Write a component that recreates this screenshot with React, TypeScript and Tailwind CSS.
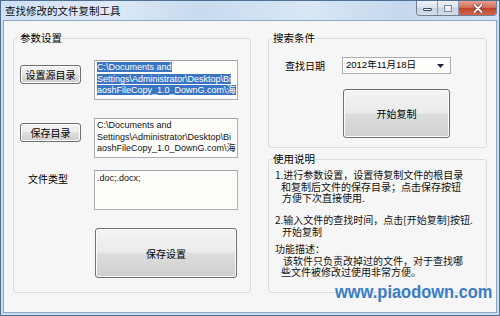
import React from 'react';

const cjk = "font-['Noto_Sans_CJK_SC','Noto_Sans',sans-serif]";
const latin = "font-['Liberation_Sans','Noto_Sans_CJK_SC',sans-serif]";
const btnBg =
  'border border-[#707070] rounded-[3px] bg-[linear-gradient(#f3f3f3,#ebebeb_48%,#dddddd_52%,#cfcfcf)] shadow-[inset_0_0_0_1px_#fcfcfc]';

function WinButtons() {
  return (
    <div className="flex h-[15px] self-start mr-[2px] rounded-b-[4px] overflow-hidden border border-t-0 border-[#6f8198]">
      <div className="w-[21px] h-full flex items-end justify-center pb-[4px] bg-[linear-gradient(#eef2f7,#d9e1ea_50%,#c9d3df_51%,#d6dee8)] border-r border-[#8e9cae]">
        <div className="w-[9px] h-[3px] bg-white border border-[#3c4a5c] rounded-[1px]" />
      </div>
      <div className="w-[21px] h-full flex items-center justify-center bg-[linear-gradient(#eef2f7,#d9e1ea_50%,#c9d3df_51%,#d6dee8)] border-r border-[#8e9cae]">
        <div className="w-[8px] h-[7px] border border-[#7f8a98] bg-white/60" />
      </div>
      <div className="w-[37px] h-full flex items-center justify-center bg-[linear-gradient(#e7a08f,#d16a55_50%,#c0432d_51%,#d0664c)]">
        <svg width="10" height="9" viewBox="0 0 10 9">
          <path d="M1.5 1 L8.5 8 M8.5 1 L1.5 8" stroke="#5a1e14" strokeWidth="3.2" strokeLinecap="round" />
          <path d="M1.5 1 L8.5 8 M8.5 1 L1.5 8" stroke="#ffffff" strokeWidth="2" strokeLinecap="round" />
        </svg>
      </div>
    </div>
  );
}

function TextBox({ lines, selected, className = '' }: { lines: string[]; selected?: boolean; className?: string }) {
  return (
    <div className={`w-[144px] border border-[#abadb3] border-t-[#a0a4ab] bg-[#fffdfa] pl-[2px] pt-[1px] overflow-hidden ${className}`}>
      {lines.map((l, i) => (
        <div key={i} className="h-[11.5px] leading-[11.5px] whitespace-nowrap">
          <span className={selected ? 'bg-[#3a75c4] text-white' : 'text-[#111]'}>{l}</span>
        </div>
      ))}
    </div>
  );
}

const pathLines = ['C:\\Documents and', 'Settings\\Administrator\\Desktop\\Bi', 'aoshFileCopy_1.0_DownG.com\\海'];

export default function App() {
  return (
    <div className={`w-[500px] h-[316px] flex flex-col border border-[#4f6f93] bg-[#c9dcf0] px-[2px] pb-[2px] ${cjk} text-[#000]`}>
      {/* title bar */}
      <div className="h-[19px] flex items-start justify-between -mx-[2px] bg-[linear-gradient(100deg,#cfe0f3_0%,#dde9f7_22%,#c8dbef_40%,#d9e7f6_62%,#c5d8ee_80%,#d2e2f4_100%)]">
        <div className="pl-[4px] pt-[2px] text-[10.5px] leading-[16px] text-[#0b0b0b]">查找修改的文件复制工具</div>
        <WinButtons />
      </div>

      {/* client area */}
      <div className="flex-1 border border-[#8ea6c0] bg-[#f6f6f6] flex pt-[10px] pl-[9px] gap-[17px]">
        {/* left group */}
        <fieldset className="w-[238px] h-[262px] border border-[#d5dde3] rounded-[3px]">
          <legend className="ml-[5px] px-[1px] text-[10.5px] leading-[14px]">参数设置</legend>
          <div className="flex mt-[15px]">
            <div className="w-[80px]">
              <button className={`ml-[6px] mt-[3px] w-[61px] h-[19px] text-[10px] leading-[15px] ${btnBg}`}>设置源目录</button>
            </div>
            <TextBox lines={pathLines} selected className={`h-[40px] text-[9px] ${latin}`} />
          </div>
          <div className="flex mt-[18px]">
            <div className="w-[80px]">
              <button className={`ml-[6px] mt-[1px] w-[61px] h-[19px] text-[10px] leading-[15px] ${btnBg}`}>保存目录</button>
            </div>
            <TextBox lines={pathLines} className={`h-[40px] text-[9px] ${latin}`} />
          </div>
          <div className="flex mt-[12px]">
            <div className="w-[80px]">
              <div className="ml-[14px] mt-[2px] text-[10px] leading-[14px]">文件类型</div>
            </div>
            <TextBox lines={['.doc;.docx;']} className={`h-[40px] pt-[2px] text-[9px] ${latin}`} />
          </div>
          <button className={`mt-[18px] ml-[81px] w-[142px] h-[50px] text-[10px] ${btnBg}`}>保存设置</button>
        </fieldset>

        {/* right column */}
        <div className="w-[219px] flex flex-col gap-[4px]">
          <fieldset className="h-[117px] border border-[#d5dde3] rounded-[3px]">
            <legend className="ml-[3px] px-[1px] text-[10.5px] leading-[14px]">搜索条件</legend>
            <div className="flex items-center mt-[12px]">
              <div className="ml-[16px] w-[57px] text-[10px] leading-[14px]">查找日期</div>
              <div className={`w-[109px] h-[17px] border border-[#abadb3] bg-[#fffdfa] flex items-center justify-between pl-[3px] pr-[6px] text-[9.5px] ${latin}`}>
                <span>2012年11月18日</span>
                <svg width="7" height="4" viewBox="0 0 7 4">
                  <path d="M0 0 H7 L3.5 4 Z" fill="#1d2a3a" />
                </svg>
              </div>
            </div>
            <button className={`mt-[15px] ml-[74px] w-[107px] h-[49px] text-[10px] ${btnBg}`}>开始复制</button>
          </fieldset>

          <fieldset className="relative h-[141px] border border-[#d5dde3] rounded-[3px]">
            <legend className="ml-[3px] px-[1px] text-[10.5px] leading-[14px]">使用说明</legend>
            <div className="pl-[6px] mt-[3px] text-[10px] leading-[11.5px] text-[#111] whitespace-nowrap">
              <div>1.进行参数设置，设置待复制文件的根目录</div>
              <div className="pl-[6px]">和复制后文件的保存目录；点击保存按钮</div>
              <div className="pl-[7px]">方便下次直接使用.</div>
              <div className="mt-[10.5px]">2.输入文件的查找时间，点击[开始复制]按钮.</div>
              <div className="pl-[7px]">开始复制</div>
              <div className="mt-[6px]">功能描述：</div>
              <div className="pl-[8px]">该软件只负责改掉过的文件，对于查找哪</div>
              <div className="pl-[6px]">些文件被修改过使用非常方便。</div>
            </div>
            <div className="absolute left-[66px] top-[117px] origin-left scale-x-[0.94] text-[17.5px] leading-[18px] font-bold text-[#3b7cc6] font-['Liberation_Sans',sans-serif] whitespace-nowrap">
              www.piaodown.com
            </div>
          </fieldset>
        </div>
      </div>
    </div>
  );
}
